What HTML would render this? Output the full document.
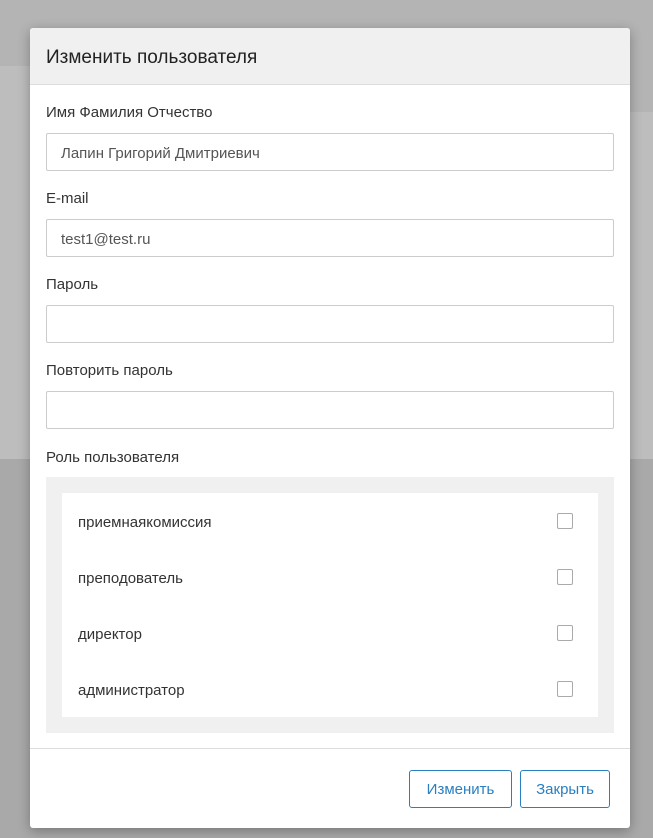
<!DOCTYPE html><html><head><meta charset="utf-8"><style>
body{margin:0;width:653px;height:838px;background:#a9a9a9;font-family:"Liberation Sans","DejaVu Sans",sans-serif;position:relative;overflow:hidden}
.bg0{position:absolute;left:0;top:0;width:653px;height:66px;background:#b4b4b4}
.bg1{position:absolute;left:0;top:66px;width:653px;height:393px;background:#bdbdbd}
.bg3{position:absolute;left:600px;top:66px;width:53px;height:46px;background:#b4b4b4}
.m{position:absolute;left:30px;top:28px;width:600px;height:800px;background:#fff;border-radius:3px;box-shadow:0 3px 12px rgba(0,0,0,.3);overflow:hidden}
.h{height:56px;background:#f0f0f0;border-bottom:1px solid #ddd;font-size:19px;color:#222;line-height:60px;padding-left:16px}
.l{position:absolute;left:16px;font-size:15px;color:#333;line-height:20px}
.i{position:absolute;left:16px;width:566px;height:36px;border:1px solid #ccc;border-radius:2px;font-size:15px;color:#555;line-height:40px;text-indent:14px}
.r{position:absolute;left:16px;top:449px;width:568px;height:256px;background:#f0f0f0}
.ri{position:absolute;left:16px;top:16px;width:536px;height:224px;background:#fff}
.row{position:absolute;left:16px;font-size:15px;color:#333;line-height:20px}
.cb{position:absolute;left:495px;width:14px;height:14px;border:1px solid #aaa;border-radius:2px}
.f{position:absolute;left:0;top:720px;width:600px;border-top:1px solid #ddd}
.b{position:absolute;top:742px;height:36px;border:1px solid #2a7fc0;border-radius:3px;color:#2a7fc0;font-size:15px;line-height:38px;text-align:center}
</style></head><body>
<div class="bg0"></div><div class="bg1"></div><div class="bg3"></div>
<div class="m">
<div class="h">Изменить пользователя</div>
<div class="l" style="top:75px">Имя Фамилия Отчество</div>
<div class="i" style="top:105px">Лапин Григорий Дмитриевич</div>
<div class="l" style="top:161px">E-mail</div>
<div class="i" style="top:191px">test1@test.ru</div>
<div class="l" style="top:247px">Пароль</div>
<div class="i" style="top:277px"></div>
<div class="l" style="top:333px">Повторить пароль</div>
<div class="i" style="top:363px"></div>
<div class="l" style="top:420px">Роль пользователя</div>
<div class="r"><div class="ri">
<div class="row" style="top:20px">приемнаякомиссия</div><div class="cb" style="top:20px"></div>
<div class="row" style="top:76px">преподователь</div><div class="cb" style="top:76px"></div>
<div class="row" style="top:132px">директор</div><div class="cb" style="top:132px"></div>
<div class="row" style="top:188px">администратор</div><div class="cb" style="top:188px"></div>
</div></div>
<div class="f"></div>
<div class="b" style="left:379px;width:101px">Изменить</div>
<div class="b" style="left:490px;width:88px">Закрыть</div>
</div>
</body></html>
